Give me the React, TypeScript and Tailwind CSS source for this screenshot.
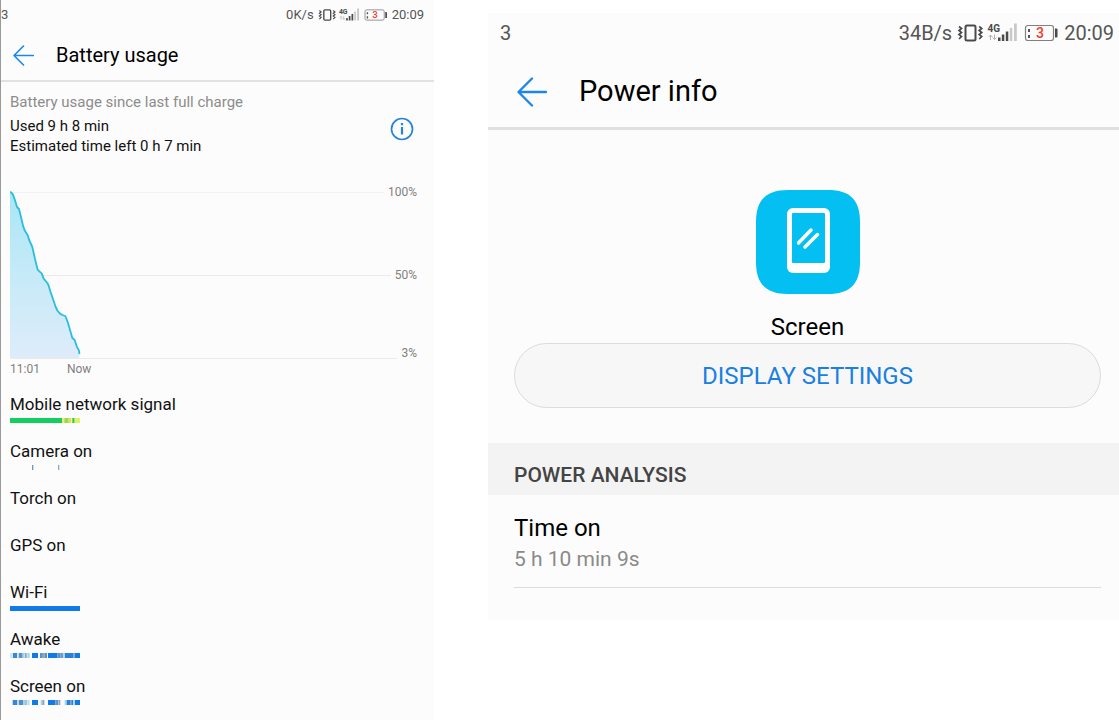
import React from "react";

type Segment = { x: number; w: number; color: string };

const BLUE = "#107be8";
const STEEL = "#5a92cc";
const PALE = "#9fd8ee";
const GREY = "#8ea3b5";

const usageRows: { label: string; segments: Segment[] }[] = [
  {
    label: "Mobile network signal",
    segments: [
      { x: 0, w: 156, color: "#14cf60" },
      { x: 156, w: 7, color: "#e6f06a" },
      { x: 163, w: 13, color: "#9bd84e" },
      { x: 176, w: 8, color: "#dfe04c" },
      { x: 184, w: 3, color: "#eef29a" },
      { x: 187, w: 7, color: "#22cc55" },
      { x: 194, w: 16, color: "#e3f064" },
    ],
  },
  {
    label: "Camera on",
    segments: [
      { x: 66, w: 4, color: "#6f97bf" },
      { x: 144, w: 4, color: "#85abcc" },
    ],
  },
  { label: "Torch on", segments: [] },
  { label: "GPS on", segments: [] },
  { label: "Wi-Fi", segments: [{ x: 0, w: 210, color: BLUE }] },
  {
    label: "Awake",
    segments: [
      { x: 1, w: 7, color: "#bfe6f4" },
      { x: 9, w: 12, color: "#3a86d4" },
      { x: 21, w: 4, color: "#d4ecf7" },
      { x: 26, w: 12, color: STEEL },
      { x: 38, w: 6, color: PALE },
      { x: 45, w: 5, color: GREY },
      { x: 52, w: 7, color: PALE },
      { x: 66, w: 18, color: BLUE },
      { x: 90, w: 6, color: STEEL },
      { x: 96, w: 8, color: GREY },
      { x: 104, w: 7, color: STEEL },
      { x: 114, w: 28, color: BLUE },
      { x: 142, w: 10, color: STEEL },
      { x: 152, w: 8, color: "#6f9cc4" },
      { x: 160, w: 5, color: PALE },
      { x: 165, w: 24, color: "#2b80da" },
      { x: 189, w: 5, color: GREY },
      { x: 194, w: 16, color: BLUE },
    ],
  },
  {
    label: "Screen on",
    segments: [
      { x: 8, w: 14, color: "#3a86d4" },
      { x: 26, w: 13, color: "#4a90cf" },
      { x: 39, w: 7, color: PALE },
      { x: 46, w: 4, color: GREY },
      { x: 52, w: 7, color: "#b9e2f2" },
      { x: 66, w: 18, color: BLUE },
      { x: 92, w: 5, color: "#a9d6ee" },
      { x: 97, w: 6, color: GREY },
      { x: 114, w: 22, color: BLUE },
      { x: 136, w: 8, color: STEEL },
      { x: 145, w: 6, color: GREY },
      { x: 164, w: 6, color: PALE },
      { x: 170, w: 10, color: "#2b80da" },
      { x: 180, w: 4, color: GREY },
      { x: 184, w: 6, color: "#2b80da" },
      { x: 194, w: 16, color: BLUE },
    ],
  },
];

function StatusIcons({ className }: { className: string }) {
  return (
    <svg viewBox="0 0 102 20" className={className} aria-hidden="true">
      <rect x="8.5" y="2.5" width="10" height="15" rx="1.5" fill="none" stroke="#4a4a4a" strokeWidth="2" />
      <g fill="none" stroke="#4a4a4a" strokeWidth="1.7">
        <path d="M2 3.5l2.500 2-2.500 2 2.500 2-2.500 2 2.500 2-2.500 2.500" />
        <path d="M22.200 3.500l2.500 2-2.500 2 2.500 2-2.500 2 2.500 2-2.500 2.500" />
      </g>
      <text x="30.5" y="8.500" fontFamily="Roboto, sans-serif" fontWeight="700" fontSize="10" fill="#4a4a4a">
        4G
      </text>
      <path d="M33.500 17v-5m-1.800 2l1.800-2 1.800 2M37.500 11.500v5m-1.800-2l1.800 2 1.800-2" fill="none" stroke="#b5b5b5" strokeWidth="1" />
      <g fill="#4a4a4a">
        <rect x="41" y="14.500" width="2.500" height="3.500" />
        <rect x="44.800" y="11.500" width="2.500" height="6.500" />
        <rect x="48.800" y="8.500" width="2.500" height="9.500" />
      </g>
      <g fill="#c9c9c9">
        <rect x="52.800" y="5" width="2.500" height="13" />
        <rect x="57" y="0.500" width="2.800" height="17.500" />
      </g>
      <rect x="68.500" y="2.500" width="28" height="15" rx="2.500" fill="none" stroke="#808080" strokeWidth="1.200" />
      <path d="M98 5.500h1.500a1 1 0 0 1 1 1v7a1 1 0 0 1-1 1H98z" fill="#4a4a4a" />
      <path d="M71 6h2v3h-2zM71 12h2v3h-2z" fill="#555" />
      <text x="83" y="15" textAnchor="middle" fontFamily="Roboto, sans-serif" fontWeight="500" fontSize="14" fill="#ee3b2e">
        3
      </text>
    </svg>
  );
}

function BackArrow({ className }: { className: string }) {
  return (
    <svg viewBox="0 0 30 30" className={className} fill="none" stroke="#1a86ee" strokeWidth="2.3" strokeLinecap="round" strokeLinejoin="round" aria-hidden="true">
      <path d="M29 15H1.500M15 1.500L1.500 15 15 28.500" />
    </svg>
  );
}

const line =
  "M31 37L35 39L40 45L46 62L52 82L58 88L64 112L70 138L75 152L85 168L88 180L98 202L106 238L114 270L120 276L126 281L132 297L143 310L147 318L152 335L160 358L168 382L174 394L181 402L188 406L197 409L205 430L218 475L225 481L231 500L238 513L239 521";

function BatteryChart() {
  return (
    <figure className="relative mt-7" aria-label="Battery level">
      <div className="flex h-4 items-center gap-1 text-xs text-[#808080]">
        <span className="h-px flex-1 bg-[#f2f2f2]" />
        100%
      </div>
      <div className="mt-[67px] flex h-4 items-center gap-1 text-xs text-[#808080]">
        <span className="h-px flex-1 bg-[#ebebeb]" />
        50%
      </div>
      <div className="mt-[62px] flex h-4 items-end gap-1 text-xs text-[#808080]">
        <span className="mb-[2px] h-px flex-1 bg-[#ebebeb]" />
        <span className="leading-4">3%</span>
      </div>
      <svg viewBox="31 34 213 501" className="absolute left-0 top-[7px] h-[167px] w-[71px]" aria-hidden="true">
        <defs>
          <linearGradient id="level" x1="0" y1="0" x2="0" y2="1">
            <stop offset="0" stopColor="#a9e6f5" />
            <stop offset="0.5" stopColor="#c6eaf8" />
            <stop offset="1" stopColor="#deecfa" />
          </linearGradient>
        </defs>
        <path d={line + "L239 535L31 535Z"} fill="url(#level)" />
        <path d={line} fill="none" stroke="#2cbfdc" strokeWidth="5.500" strokeLinejoin="round" strokeLinecap="round" />
      </svg>
      <figcaption className="flex gap-[27px] text-xs leading-4 text-[#808080]">
        <span>11:01</span>
        <span>Now</span>
      </figcaption>
    </figure>
  );
}

function BatteryUsage() {
  return (
    <section className="border-l border-[#999] bg-[#fcfcfc]">
      <div className="flex h-[30px] items-center justify-between pr-[10px] text-[13px] text-[#555]">
        <span>3</span>
        <div className="flex items-center gap-1">
          <span>0K/s</span>
          <StatusIcons className="h-[14px] w-[70px]" />
          <span>20:09</span>
        </div>
      </div>
      <header className="flex h-[52px] items-center gap-[22px] border-b-2 border-[#e2e2e2] pl-3">
        <button type="button" aria-label="Back" className="block">
          <BackArrow className="size-[21px]" />
        </button>
        <h1 className="text-xl text-black">Battery usage</h1>
      </header>
      <div className="pl-[9px] pr-[17px] pt-[10px]">
        <p className="text-[15px] leading-5 text-[#8c8c8c]">Battery usage since last full charge</p>
        <div className="mt-1 flex items-start justify-between">
          <p className="text-[15px] leading-5 text-[#111]">
            Used 9 h 8 min
            <br />
            Estimated time left 0 h 7 min
          </p>
          <button type="button" aria-label="Information" className="mr-[3px] mt-px block">
            <svg viewBox="0 0 24 24" className="size-6" fill="none" stroke="#2583dc" aria-hidden="true">
              <circle cx="12" cy="12" r="10.500" strokeWidth="1.700" />
              <path d="M12 10v7.500M12 6v2.200" strokeWidth="2.200" />
            </svg>
          </button>
        </div>
        <BatteryChart />
        <ul className="mt-[17px]">
          {usageRows.map((row) => (
            <li key={row.label} className="h-[47px]">
              <p className="text-[17px] leading-5 text-[#111]">{row.label}</p>
              <svg viewBox="0 0 210 15" className="mt-1 block h-[5px] w-[70px]" preserveAspectRatio="none" aria-hidden="true">
                {row.segments.map((s) => (
                  <rect key={s.x} x={s.x} width={s.w} height="15" fill={s.color} />
                ))}
              </svg>
            </li>
          ))}
        </ul>
      </div>
    </section>
  );
}

function PowerInfo() {
  return (
    <section className="mt-[13px] self-start bg-[#fcfcfc] pb-8">
      <div className="flex h-10 items-center justify-between pl-3 pr-[5px] text-xl text-[#555]">
        <span>3</span>
        <div className="flex items-center gap-[5px]">
          <span>34B/s</span>
          <StatusIcons className="h-5 w-[102px]" />
          <span>20:09</span>
        </div>
      </div>
      <header className="flex h-[77px] items-center gap-8 border-b-[3px] border-[#e0e0e0] pl-[29px] pt-[3px]">
        <button type="button" aria-label="Back" className="block">
          <BackArrow className="size-[30px]" />
        </button>
        <h1 className="text-[29px] text-black">Power info</h1>
      </header>
      <div className="flex flex-col items-center pl-[26px] pr-[18px] pt-[60px]">
        <svg viewBox="0 0 104 104" className="size-[104px]" aria-hidden="true">
          <path d="M32 0H72C94 0 104 10 104 32V72C104 94 94 104 72 104H32C10 104 0 94 0 72V32C0 10 10 0 32 0Z" fill="#04c0f2" />
          <rect x="31" y="18" width="43" height="65" rx="6" fill="#fff" />
          <rect x="36" y="23" width="33" height="50" rx="1" fill="#04c0f2" />
          <path d="M42.500 53L55 40M49 57L61.500 44.500" stroke="#fff" strokeWidth="3.500" strokeLinecap="round" />
        </svg>
        <h2 className="mt-[17px] text-2xl leading-8 text-black">Screen</h2>
        <button type="button" className="h-[65px] w-full rounded-full border border-[#dcdcdc] bg-[#f7f7f7] text-2xl text-[#1a80e0]">
          DISPLAY SETTINGS
        </button>
      </div>
      <h3 className="mt-[35px] flex h-[52px] items-end bg-[#f3f3f3] pb-[6px] pl-[26px] text-[21px] leading-7 font-medium text-[#444]">
        POWER ANALYSIS
      </h3>
      <dl className="ml-[26px] mr-[18px] border-b border-[#dcdcdc] pb-3 pt-[17px]">
        <dt className="text-2xl leading-8 text-black">Time on</dt>
        <dd className="text-[21px] leading-[31px] text-[#8a8a8a]">5 h 10 min 9s</dd>
      </dl>
    </section>
  );
}

export default function App() {
  return (
    <main className="grid min-h-screen grid-cols-[434fr_631fr] gap-x-[54px] bg-white font-[Roboto,sans-serif]">
      <BatteryUsage />
      <PowerInfo />
    </main>
  );
}
